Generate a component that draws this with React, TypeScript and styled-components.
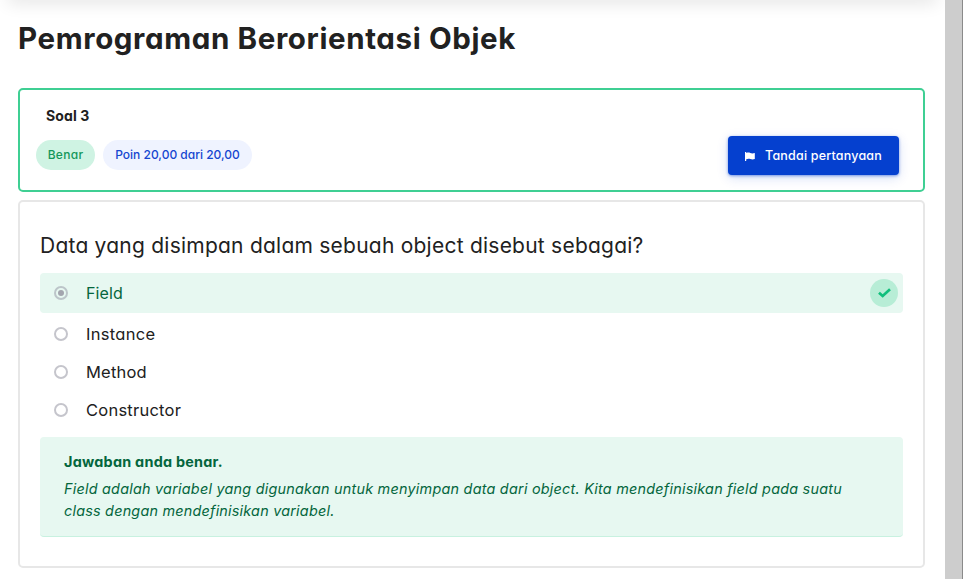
import React from "react";
import styled, { createGlobalStyle } from "styled-components";

const GlobalStyle = createGlobalStyle`
  * { box-sizing: border-box; }
  body {
    margin: 0;
    background: #fff;
    color: #212121;
    font-family: Inter, "Open Sans", sans-serif;
    font-feature-settings: "cv11";
    overflow: hidden;
  }
`;

const Page = styled.div`
  display: flex;
  height: 579px;
`;

const Content = styled.main`
  flex: 1;
  min-width: 0;
  overflow: hidden;
  padding: 0 20px 0 18px;
`;

const HeaderEdge = styled.div`
  height: 10px;
  margin: -10px -12px 0 -10px;
  box-shadow: 0 1px 18px rgba(0, 0, 0, 0.16);
`;

const ScrollTrack = styled.div`
  width: 18px;
  background: #cdcdcd;
  border-right: 1px solid #8a8a8a;
`;

const Text = styled.span<{ $spacing?: number }>`
  letter-spacing: ${(p) => p.$spacing ?? 0}px;
  white-space: nowrap;
`;

const Title = styled.h1`
  margin: 18px 0 30px;
  height: 40px;
  font-size: 29.5px;
  line-height: 40px;
  font-weight: 700;
`;

const InfoCard = styled.section`
  height: 104px;
  border: 2px solid #3fcf93;
  border-radius: 5px;
  padding: 16px 24px 0 16px;
`;

const QuestionNumber = styled.h2`
  margin: 0 0 14px 10px;
  font-size: 14px;
  line-height: 20px;
  font-weight: 700;
`;

const InfoRow = styled.div`
  display: flex;
  align-items: flex-start;
  gap: 8px;
`;

const Badge = styled.span<{ $tone: "success" | "info"; $width: number }>`
  display: flex;
  align-items: center;
  justify-content: center;
  width: ${(p) => p.$width}px;
  height: 30px;
  padding-bottom: 2px;
  border-radius: 15px;
  font-size: 12px;
  font-weight: 500;
  color: ${(p) => (p.$tone === "success" ? "#14975b" : "#1546d0")};
  background: ${(p) => (p.$tone === "success" ? "#cff3e3" : "#eff3ff")};
`;

const FlagButton = styled.button`
  display: flex;
  align-items: center;
  width: 171px;
  height: 39px;
  margin: -4px 0 0 auto;
  padding: 0 0 0 17px;
  gap: 10px;
  border: 0;
  border-radius: 4px;
  background: #0540cf;
  color: #fff;
  font: 500 12.5px Inter, sans-serif;
  font-feature-settings: "cv11";
  box-shadow: 0 1px 3px rgba(5, 64, 207, 0.5), 0 3px 12px rgba(5, 64, 207, 0.16);
  svg { margin-top: 1px; }
`;

const QuestionCard = styled.section`
  height: 368px;
  margin-top: 8px;
  border: 2px solid #e7e7e7;
  border-radius: 5px;
  padding: 28px 20px 0;
`;

const Prompt = styled.p`
  margin: 0 0 12px;
  font-size: 21px;
  line-height: 31px;
`;

const Option = styled.label<{ $correct?: boolean }>`
  display: flex;
  align-items: center;
  height: ${(p) => (p.$correct ? 40 : 38)}px;
  margin-bottom: ${(p) => (p.$correct ? 2 : 0)}px;
  padding: 0 5px 0 14px;
  border-radius: 4px;
  font-size: ${(p) => (p.$correct ? 16 : 16.5)}px;
  color: ${(p) => (p.$correct ? "#04663d" : "#212121")};
  background: ${(p) => (p.$correct ? "#e7f8f1" : "transparent")};
`;

const Radio = styled.span<{ $checked?: boolean }>`
  display: flex;
  align-items: center;
  justify-content: center;
  width: 14px;
  height: 14px;
  margin-right: 18px;
  border: 2px solid ${(p) => (p.$checked ? "#bcc5c9" : "#c5c5cc")};
  border-radius: 50%;
  &::after {
    content: "";
    width: 6px;
    height: 6px;
    border-radius: 50%;
    background: ${(p) => (p.$checked ? "#a3a5ae" : "transparent")};
  }
`;

const CheckMark = styled.span`
  display: flex;
  align-items: center;
  justify-content: center;
  width: 28px;
  height: 28px;
  margin-left: auto;
  border-radius: 50%;
  background: #b7edd6;
`;

const Feedback = styled.div`
  height: 100px;
  margin-top: 8px;
  padding: 14px 24px 0;
  border-radius: 4px;
  border-bottom: 1px solid #c8f1e0;
  background: #e7f8f1;
  color: #04663d;
  font-size: 14.4px;
  line-height: 22px;
`;

const FeedbackTitle = styled.div`
  margin-bottom: 6px;
  line-height: 21px;
  font-weight: 700;
`;

const FeedbackLine = styled.div`
  font-style: italic;
`;

const options = [
  { label: "Field", spacing: 0.1, correct: true },
  { label: "Instance", spacing: 0.3 },
  { label: "Method", spacing: 0.2 },
  { label: "Constructor", spacing: 0.24 },
];

export default function App() {
  return (
    <Page>
      <GlobalStyle />
      <Content>
        <HeaderEdge />
        <Title>
          <Text $spacing={0.62}>Pemrograman Berorientasi Objek</Text>
        </Title>
        <InfoCard>
          <QuestionNumber>
            <Text $spacing={0.1}>Soal 3</Text>
          </QuestionNumber>
          <InfoRow>
            <Badge $tone="success" $width={59}>
              <Text $spacing={0.3}>Benar</Text>
            </Badge>
            <Badge $tone="info" $width={149}>
              <Text $spacing={0}>Poin 20,00 dari 20,00</Text>
            </Badge>
            <FlagButton>
              <svg width="10" height="9" viewBox="0 0 10 9" fill="#fff" aria-hidden="true">
                <path d="M0 0h1.200v1C2.800.4 4 .4 5.300 1c1.400.6 2.800.5 4.500 0v6c-1.700.7-3 .6-4.500 0C3.900 6.500 2.600 6.600 1.200 7.200V9H0z" />
              </svg>
              <Text $spacing={0.2}>Tandai pertanyaan</Text>
            </FlagButton>
          </InfoRow>
        </InfoCard>
        <QuestionCard>
          <Prompt>
            <Text $spacing={0.235}>Data yang disimpan dalam sebuah object disebut sebagai?</Text>
          </Prompt>
          {options.map((o) => (
            <Option key={o.label} $correct={o.correct}>
              <Radio $checked={o.correct} />
              <Text $spacing={o.spacing}>{o.label}</Text>
              {o.correct && (
                <CheckMark>
                  <svg width="13" height="10" viewBox="0 0 13 10" fill="none" aria-hidden="true">
                    <path d="M1 4.700 4.700 8 12 1.300" stroke="#10bf7c" strokeWidth="2.700" />
                  </svg>
                </CheckMark>
              )}
            </Option>
          ))}
          <Feedback>
            <FeedbackTitle>
              <Text $spacing={0.25}>Jawaban anda benar.</Text>
            </FeedbackTitle>
            <FeedbackLine>
              <Text $spacing={0.237}>
                Field adalah variabel yang digunakan untuk menyimpan data dari object. Kita mendefinisikan field pada suatu
              </Text>
            </FeedbackLine>
            <FeedbackLine>
              <Text $spacing={0.22}>class dengan mendefinisikan variabel.</Text>
            </FeedbackLine>
          </Feedback>
        </QuestionCard>
      </Content>
      <ScrollTrack />
    </Page>
  );
}
